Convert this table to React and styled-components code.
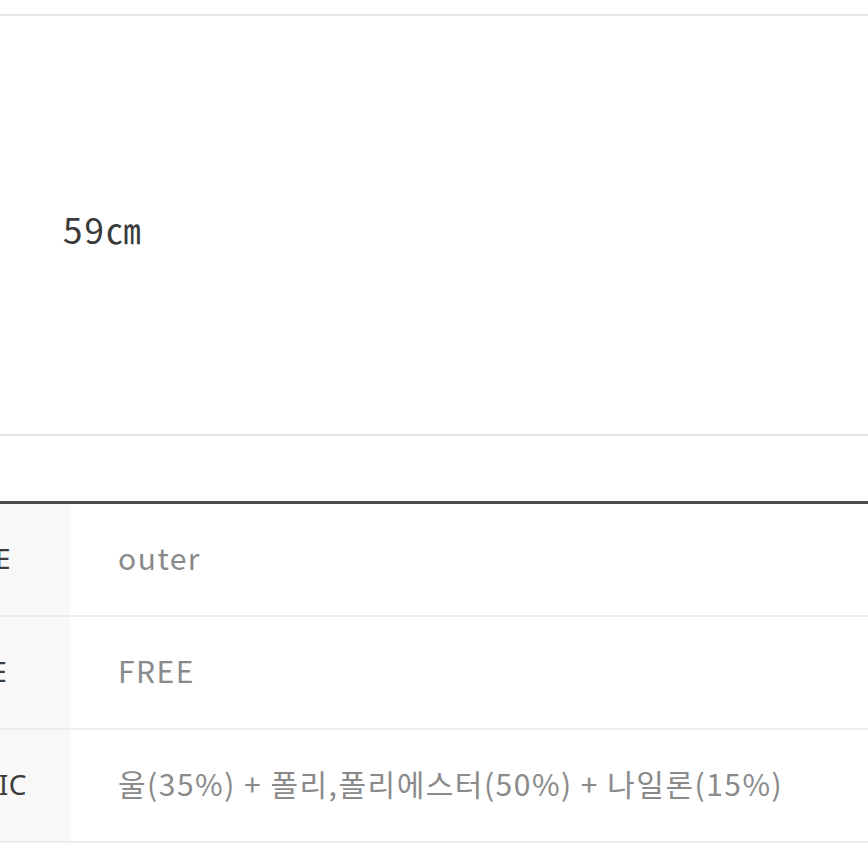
import styled, { createGlobalStyle } from "styled-components";

const GlobalStyle = createGlobalStyle`
  html, body {
    margin: 0;
    padding: 0;
    background: #fff;
  }
  body {
    font-family: "Noto Sans", "Noto Sans CJK KR", sans-serif;
    overflow: hidden;
  }
`;

const Page = styled.div`
  width: 868px;
  height: 868px;
  overflow: hidden;
  padding-top: 14px;
  box-sizing: border-box;
`;

const SizeBox = styled.div`
  height: 422px;
  border-top: 2px solid #e6e6e6;
  border-bottom: 2px solid #e3e3e3;
  display: flex;
  align-items: center;
  padding-left: 63px;
  box-sizing: border-box;
`;

const SizeText = styled.span`
  font-family: "Noto Sans CJK KR", "Noto Sans", sans-serif;
  font-size: 35px;
  letter-spacing: 2px;
  color: #3a3a3a;
  margin-top: 6px;
`;

const Table = styled.div`
  margin-top: 65px;
  margin-left: -120px;
  border-top: 3px solid #4a4a4a;
`;

const Row = styled.div`
  display: grid;
  grid-template-columns: 190px 1fr;
  height: 113px;
  border-bottom: 2px solid #ececec;
  box-sizing: border-box;
`;

const Label = styled.div`
  background: #f8f8f8;
  display: flex;
  align-items: center;
  justify-content: center;
  padding: 0 0 4px 6px;
  font-size: 28px;
  letter-spacing: 0.5px;
  color: #3c3c3c;
`;

const Value = styled.div`
  display: flex;
  align-items: center;
  padding: 0 0 5px 48px;
  font-family: "Noto Sans CJK KR", "Noto Sans", sans-serif;
  font-size: 30px;
  letter-spacing: 1.5px;
  color: #8a8a8a;
`;

const rows = [
  ["TYPE", "outer"],
  ["SIZE", "FREE"],
  ["FABRIC", "울(35%) + 폴리,폴리에스터(50%) + 나일론(15%)"],
];

export default function App() {
  return (
    <Page>
      <GlobalStyle />
      <SizeBox>
        <SizeText>59㎝</SizeText>
      </SizeBox>
      <Table>
        {rows.map(([label, value]) => (
          <Row key={label}>
            <Label>{label}</Label>
            <Value>{value}</Value>
          </Row>
        ))}
      </Table>
    </Page>
  );
}
